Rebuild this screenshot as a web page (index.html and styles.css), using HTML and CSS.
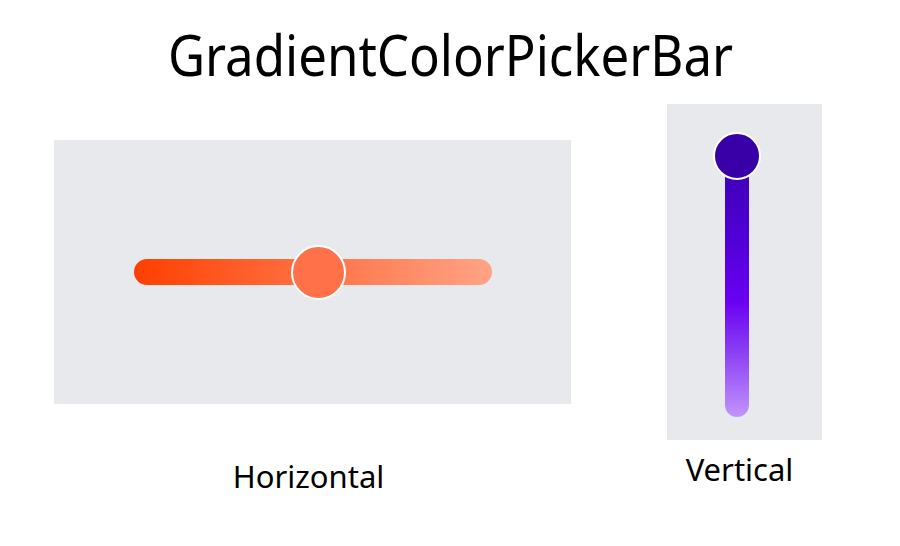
FILE: index.html
```html
<!DOCTYPE html>
<html>
<head>
<meta charset="utf-8">
<link rel="stylesheet" href="styles.css">
</head>
<body>
<h1 class="title"><span class="title-text">GradientColorPickerBar</span></h1>
<div class="row">
  <div class="col col-h">
    <div class="panel panel-h">
      <div class="track-h">
        <div class="thumb thumb-h"></div>
      </div>
    </div>
    <div class="label label-h">Horizontal</div>
  </div>
  <div class="col col-v">
    <div class="panel panel-v">
      <div class="track-v">
        <div class="thumb thumb-v"></div>
      </div>
    </div>
    <div class="label label-v">Vertical</div>
  </div>
</div>
</body>
</html>
```
FILE: styles.css
```css
html, body {
  margin: 0;
  padding: 0;
  background: #ffffff;
  font-family: "Noto Sans", "Open Sans", sans-serif;
  color: #000;
}
.title {
  margin: 0;
  padding-top: 16px;
  height: 92px;
  box-sizing: border-box;
  text-align: center;
  font-weight: 400;
  font-size: 56px;
  line-height: 76px;
}
.title-text {
  display: inline-block;
  transform: scaleX(0.91);
}
.row {
  display: flex;
  align-items: flex-start;
  padding-left: 54px;
  gap: 96px;
}
.col {
  display: flex;
  flex-direction: column;
  align-items: center;
}
.col-h { margin-top: 48px; }
.col-v { margin-top: 12px; }
.panel {
  background: #e8e9ed;
  position: relative;
  display: flex;
  align-items: center;
  justify-content: center;
}
.panel-h { width: 517px; height: 264px; }
.panel-v { width: 155px; height: 336px; align-items: flex-start; }
.track-h {
  position: relative;
  width: 358px;
  height: 26px;
  border-radius: 13px;
  background: linear-gradient(to right, #ff3f00, #ffa386);
}
.track-v {
  position: relative;
  margin-top: 56px;
  margin-right: 15px;
  width: 24px;
  height: 257px;
  border-radius: 12px;
  background: linear-gradient(to bottom, #3d00b3 0%, #5000d6 30%, #6a00f2 55%, #8c40f4 75%, #c294fc 100%);
}
.thumb {
  position: absolute;
  border: 2.5px solid #ffffff;
  border-radius: 50%;
  box-sizing: border-box;
}
.thumb-h {
  width: 55px;
  height: 55px;
  left: 157px;
  top: -14px;
  background: #ff7148;
}
.thumb-v {
  width: 48px;
  height: 48px;
  left: -12px;
  top: -28px;
  background: #3800a6;
}
.label {
  font-size: 31px;
  line-height: 40px;
}
.label-h { margin-top: 52px; padding-right: 8px; }
.label-v { margin-top: 9px; padding-right: 10px; }
```
